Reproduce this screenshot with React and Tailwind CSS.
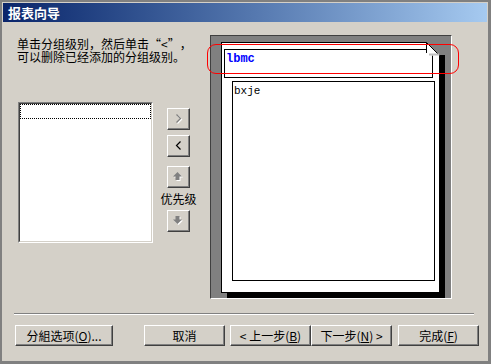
import React from "react";

function ClassicButton({ className = "", children }) {
  return (
    <div
      className={
        "flex items-center justify-center bg-[#d4d0c8] border-t border-l border-t-white border-l-white border-r border-b border-r-[#404040] border-b-[#404040] shadow-[inset_-1px_-1px_0_#808080] " +
        className
      }
    >
      {children}
    </div>
  );
}

function Chevron({ dir, disabled }) {
  const pts = dir === "right" ? "1.5,0.5 5.5,4.5 1.5,8.5" : "5.5,0.5 1.5,4.5 5.5,8.5";
  return (
    <svg width="8" height="10" viewBox="0 0 8 10">
      {disabled && (
        <polyline points={pts} transform="translate(1,1)" fill="none" stroke="#ffffff" strokeWidth="1.2" />
      )}
      <polyline points={pts} fill="none" stroke={disabled ? "#808080" : "#000000"} strokeWidth="1.2" />
    </svg>
  );
}

function Arrow({ dir }) {
  const pts =
    dir === "up"
      ? "4.5,0 9,4.5 6.5,4.5 6.5,8 2.5,8 2.5,4.5 0,4.5"
      : "2.5,0 6.5,0 6.5,3.5 9,3.5 4.5,8 0,3.5 2.5,3.5";
  return (
    <svg width="11" height="10" viewBox="0 0 11 10">
      <polygon points={pts} transform="translate(1,1)" fill="#ffffff" />
      <polygon points={pts} fill="#808080" />
    </svg>
  );
}

export default function App() {
  return (
    <div className="w-[491px] h-[364px] bg-[#d4d0c8] border-l-2 border-t-2 border-r-[3px] border-b-[3px] border-[#808080] font-['Noto_Sans_CJK_SC',sans-serif] text-black overflow-hidden">
      <div className="p-[1px] pb-0">
        <div className="h-[19px] bg-linear-to-r from-[#0a246a] to-[#a6caf0] flex items-center pl-[5px] text-white font-bold text-[13px] leading-none">
          报表向导
        </div>
      </div>

      <div className="flex pt-[13px] pl-[15px]">
        {/* left column */}
        <div className="w-[193px] flex flex-col">
          <div className="mt-[2px] text-[12px] leading-[13px] whitespace-nowrap">
            单击分组级别，然后单击<span className="inline-block w-[12px] text-right">“</span>&lt;<span className="inline-block w-[12px] text-left">”</span>，
            <br />
            可以删除已经添加的分组级别。
          </div>

          <div className="flex mt-[39px]">
            <div className="ml-[1px] w-[135px] h-[141px] border border-t-[#808080] border-l-[#808080] border-r-white border-b-white">
              <div className="w-full h-full bg-white border border-t-[#404040] border-l-[#404040] border-r-[#d4d0c8] border-b-[#d4d0c8]">
                <div className="h-[15px] border border-dotted border-black"></div>
              </div>
            </div>

            <div className="ml-[14px] w-[23px] flex flex-col items-center pt-[6px]">
              <ClassicButton className="w-[23px] h-[22px]">
                <Chevron dir="right" disabled />
              </ClassicButton>
              <ClassicButton className="w-[23px] h-[22px] mt-[5px]">
                <Chevron dir="left" />
              </ClassicButton>
              <ClassicButton className="w-[23px] h-[22px] mt-[9px]">
                <Arrow dir="up" />
              </ClassicButton>
              <div className="h-[22px] flex items-center justify-center text-[12px] leading-none whitespace-nowrap">
                优先级
              </div>
              <ClassicButton className="w-[23px] h-[22px]">
                <Arrow dir="down" />
              </ClassicButton>
            </div>
          </div>
        </div>

        {/* preview */}
        <div className="relative w-[242px] h-[264px] bg-[#808080] border border-t-[#404040] border-l-[#404040] border-r-white border-b-white">
          <div className="relative ml-[10px] mt-[6px] w-[219px] h-[251px]">
            <div className="absolute left-[6px] top-[13px] w-[218px] h-[243px] bg-black"></div>
            <div className="relative w-[219px] h-[251px] bg-white border border-black">
              <div className="ml-[2px] mt-[6px] w-[209px] h-[29px] border border-black pl-[1px] pt-[2px] font-['Liberation_Mono',monospace] font-bold text-[12px] leading-[14px] text-[#0000ff]">
                lbmc
              </div>
              <div className="ml-[10px] mt-[3px] w-[203px] h-[200px] border border-black pl-[1px] pt-[3px] font-['Liberation_Mono',monospace] text-[11px] leading-[13px]">
                bxje
              </div>
              <svg className="absolute right-[-1px] top-[-1px]" width="14" height="14" viewBox="0 0 14 14">
                <polygon points="0,0 14,0 14,14" fill="#808080" />
                <polygon points="0.5,0.5 0.5,11.5 2.5,13.5 13.5,13.5" fill="#ffffff" />
                <line x1="0.5" y1="0.5" x2="0.5" y2="11" stroke="#000" strokeWidth="1" />
                <line x1="0.5" y1="0.5" x2="13.5" y2="13.5" stroke="#000" strokeWidth="1" />
                <line x1="3" y1="12.5" x2="13" y2="12.5" stroke="#c0c0c0" strokeWidth="2" />
              </svg>
            </div>
          </div>
          <div className="absolute left-[-4px] top-[8px] w-[252px] h-[30px] border border-[#ff0000] rounded-[9px] z-20"></div>
        </div>
      </div>

      <div className="ml-[12px] mt-[14px] w-[460px] h-[2px] border-t border-t-[#808080] border-b border-b-white"></div>

      <div className="flex mt-[10px] ml-[13px] text-[12px] leading-none">
        <ClassicButton className="w-[98px] h-[21px]">
          分組选项(<span className="underline">O</span>)...
        </ClassicButton>
        <ClassicButton className="w-[81px] h-[21px] ml-[31px]">取消</ClassicButton>
        <ClassicButton className="w-[81px] h-[21px] ml-[5px]">
          &lt; 上一步(<span className="underline">B</span>)
        </ClassicButton>
        <ClassicButton className="w-[81px] h-[21px]">
          下一步(<span className="underline">N</span>) &gt;
        </ClassicButton>
        <ClassicButton className="w-[81px] h-[21px] ml-[6px]">
          完成(<span className="underline">F</span>)
        </ClassicButton>
      </div>
    </div>
  );
}
